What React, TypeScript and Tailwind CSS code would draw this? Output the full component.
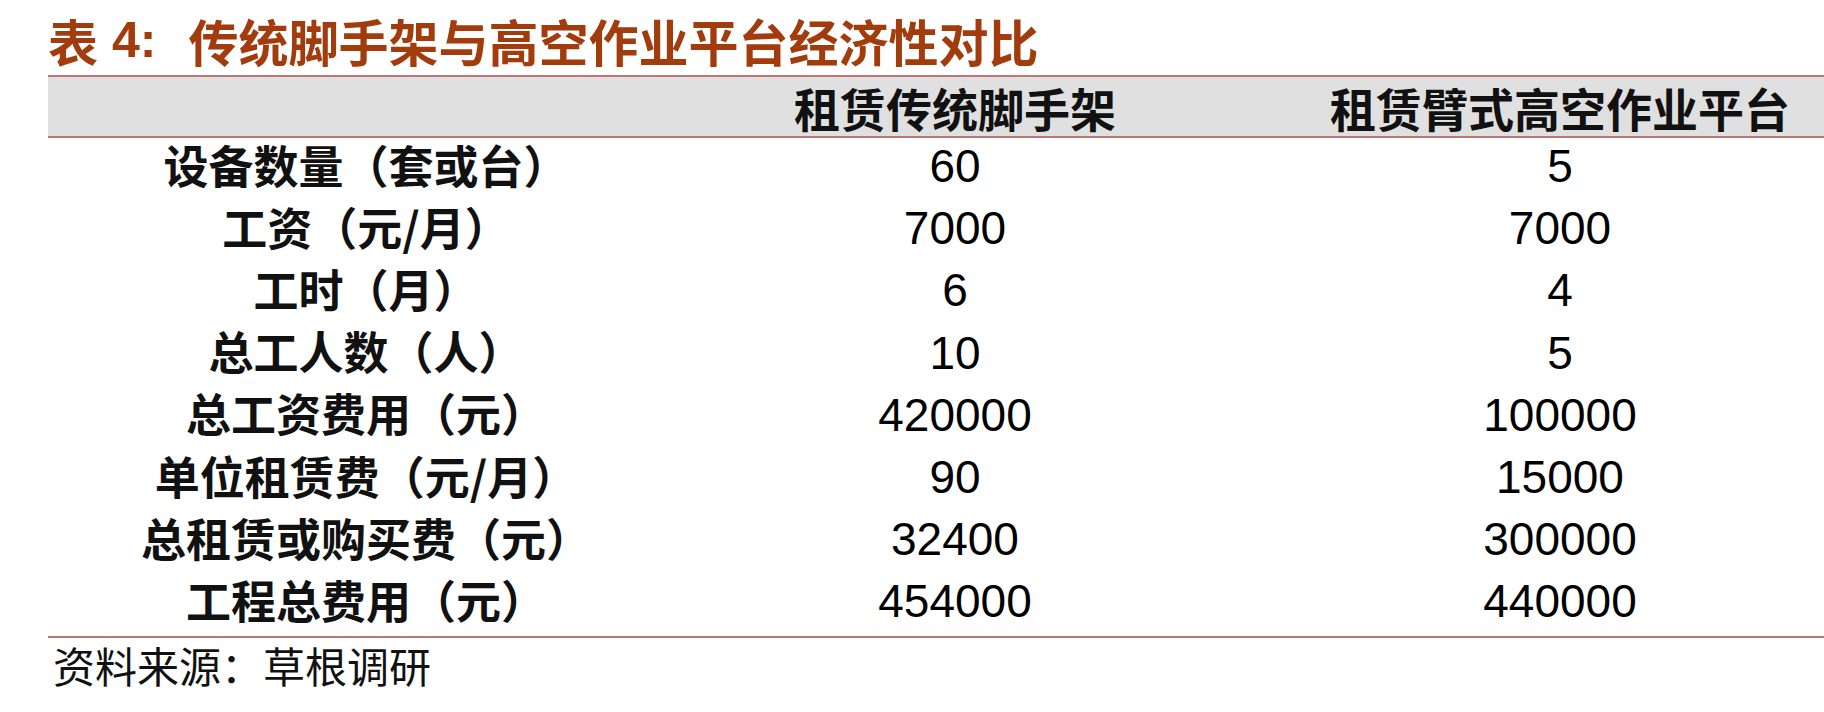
import React from "react";

const rows: [string, string, string][] = [
  ["设备数量（套或台）", "60", "5"],
  ["工资（元/月）", "7000", "7000"],
  ["工时（月）", "6", "4"],
  ["总工人数（人）", "10", "5"],
  ["总工资费用（元）", "420000", "100000"],
  ["单位租赁费（元/月）", "90", "15000"],
  ["总租赁或购买费（元）", "32400", "300000"],
  ["工程总费用（元）", "454000", "440000"],
];

const cjk = "font-['Noto_Sans_CJK_SC',sans-serif]";
const num = "font-['Liberation_Sans',Arial,sans-serif]";

export default function App() {
  return (
    <div className="w-[1824px] h-[712px] bg-white pl-[48px] overflow-hidden">
      <div className={`h-[75px] flex items-center pt-[4px] text-[#a33c0d] text-[50px] leading-none font-bold ${cjk}`}>
        <span>表</span>
        <span className={`${num} font-bold ml-[14px]`}>4:</span>
        <span className="ml-[32px]">传统脚手架与高空作业平台经济性对比</span>
      </div>
      <div className="border-t-2 border-b-2 border-[#c27575] bg-[#e0e0e0] h-[63px] grid grid-cols-[636px_542px_1fr] items-center">
        <div />
        <div className={`text-center text-[46px] leading-none font-bold text-[#111] ${cjk}`}>租赁传统脚手架</div>
        <div className={`text-center pl-[70px] text-[46px] leading-none font-bold text-[#111] ${cjk}`}>租赁臂式高空作业平台</div>
      </div>
      <div className="flex flex-col border-b-2 border-[#c27575]">
        {rows.map(([label, a, b]) => (
          <div key={label} className="h-[62.2px] grid grid-cols-[636px_542px_1fr] items-center">
            <div className={`text-center text-[45px] leading-none font-bold text-[#111] ${cjk} -mt-[10px]`}>{label}</div>
            <div className={`text-center text-[46px] leading-none text-black ${num} -mt-[6px]`}>{a}</div>
            <div className={`text-center pl-[70px] text-[46px] leading-none text-black ${num} -mt-[6px]`}>{b}</div>
          </div>
        ))}
      </div>
      <div className={`pt-[6px] pl-[5px] text-[42px] leading-none text-[#111] ${cjk}`}>资料来源：草根调研</div>
    </div>
  );
}
